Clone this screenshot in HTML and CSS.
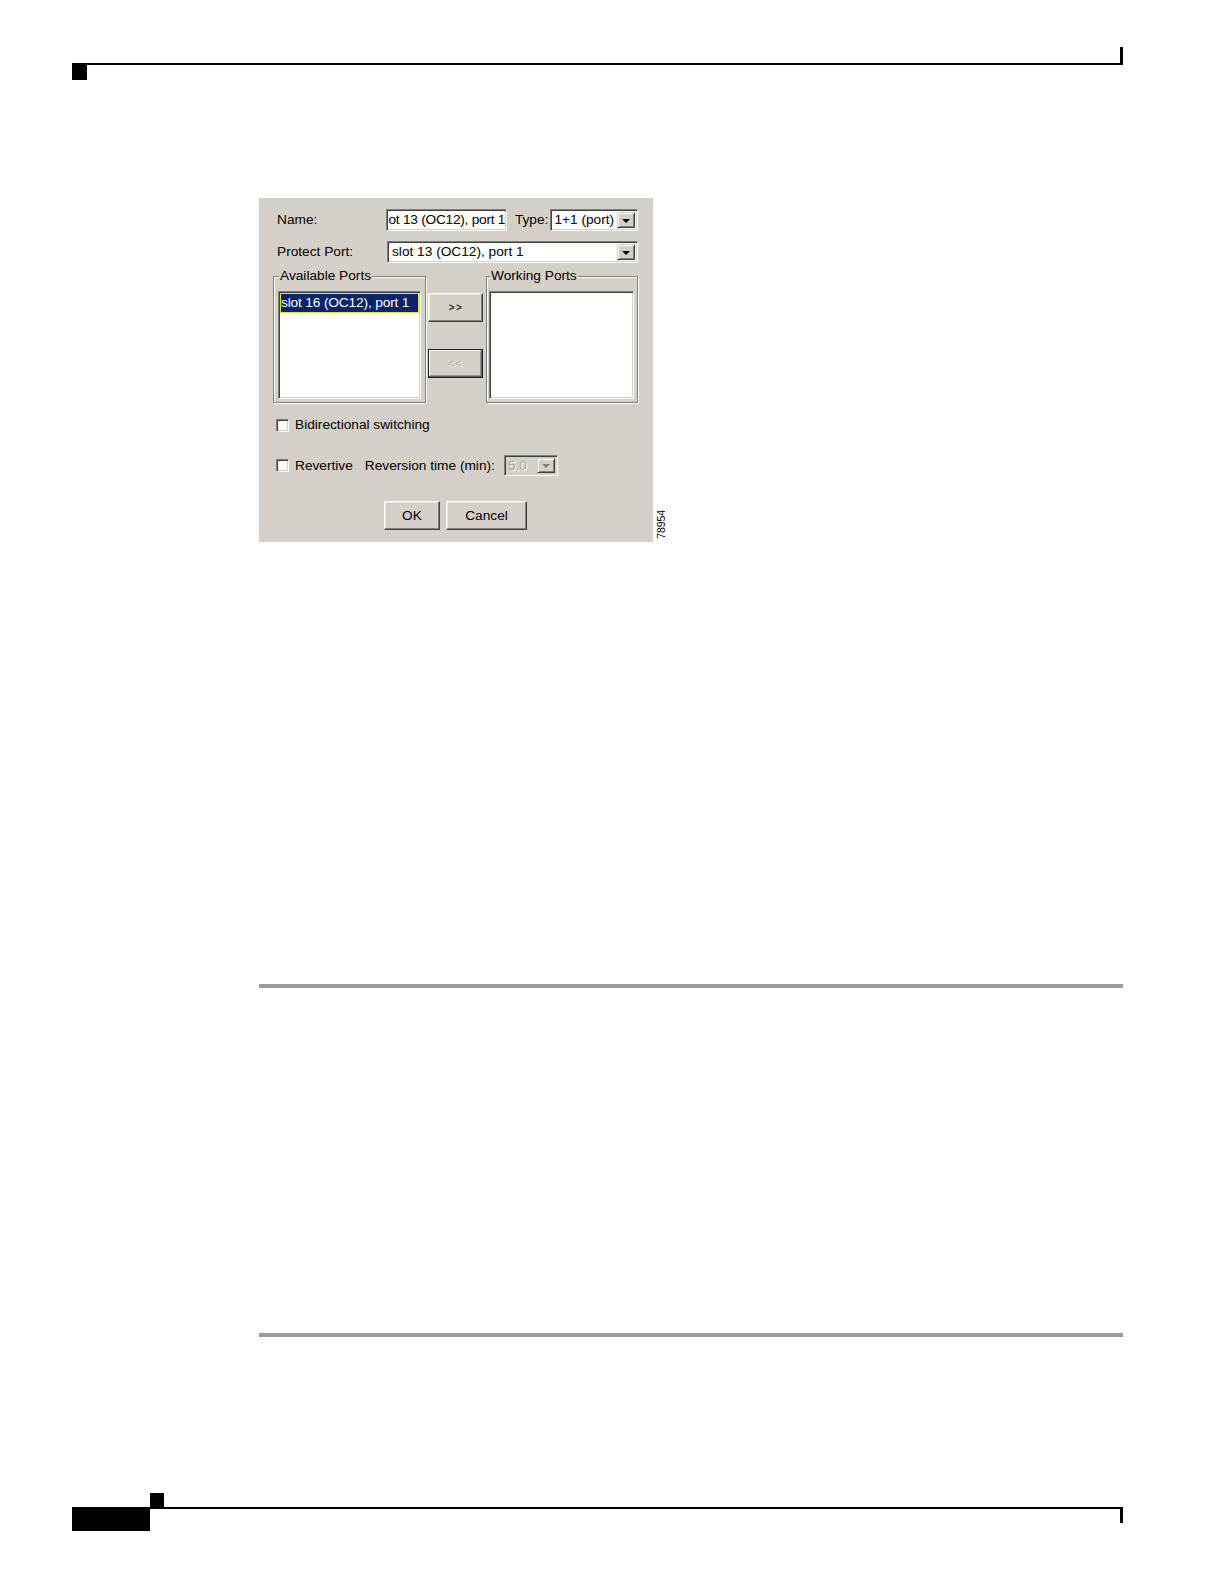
FILE: index.html
```html
<!DOCTYPE html>
<html>
<head>
<meta charset="utf-8">
<link rel="stylesheet" href="styles.css">
</head>
<body>
<div class="page">
  <div class="header"></div>
  <div class="header-mark"></div>

  <div class="figure">
    <div class="dialog">
      <div class="row row-name">
        <span class="label label-col">Name:</span>
        <div class="field field-name"><span class="field-text">ot 13 (OC12), port 1</span></div>
        <span class="label label-type">Type:</span>
        <div class="combo combo-type">
          <span class="combo-text">1+1 (port)</span>
          <span class="drop"><span class="arrow"></span></span>
        </div>
      </div>
      <div class="row row-protect">
        <span class="label label-col">Protect Port:</span>
        <div class="combo combo-protect">
          <span class="combo-text">slot 13 (OC12), port 1</span>
          <span class="drop"><span class="arrow"></span></span>
        </div>
      </div>
      <div class="groups">
        <div class="group">
          <span class="group-title">Available Ports</span>
          <div class="list">
            <div class="item selected">slot 16 (OC12), port 1</div>
          </div>
        </div>
        <div class="move-buttons">
          <div class="btn btn-move">&gt;&gt;</div>
          <div class="btn btn-move btn-disabled">&lt;&lt;</div>
        </div>
        <div class="group group-working">
          <span class="group-title">Working Ports</span>
          <div class="list"></div>
        </div>
      </div>
      <div class="row row-check1">
        <span class="checkbox"></span>
        <span class="label">Bidirectional switching</span>
      </div>
      <div class="row row-check2">
        <span class="checkbox"></span>
        <span class="label label-revertive">Revertive</span>
        <span class="label">Reversion time (min):</span>
        <div class="combo combo-time">
          <span class="combo-text">5.0</span>
          <span class="drop"><span class="arrow"></span></span>
        </div>
      </div>
      <div class="row row-buttons">
        <div class="btn btn-ok">OK</div>
        <div class="btn btn-cancel">Cancel</div>
      </div>
    </div>
    <div class="fig-id">78954</div>
  </div>

  <div class="rule rule-1"></div>
  <div class="rule rule-2"></div>

  <div class="footer-mark"></div>
  <div class="footer">
    <div class="footer-block"></div>
    <div class="footer-line"></div>
  </div>
</div>
</body>
</html>
```

FILE: styles.css
```css
html, body {
  margin: 0;
  padding: 0;
  background: #ffffff;
}

.page {
  width: 1222px;
  height: 1584px;
  overflow: hidden;
  font-family: "Liberation Sans", Arial, sans-serif;
  color: #000;
}

/* page header */
.header {
  margin: 47px 0 0 72px;
  width: 1051px;
  height: 18px;
  box-sizing: border-box;
  border-bottom: 2px solid #000;
  border-right: 3px solid #000;
}

.header-mark {
  margin-left: 72px;
  width: 15px;
  height: 15px;
  background: #000;
}

/* figure */
.figure {
  display: flex;
  align-items: flex-end;
  margin: 118px 0 0 259px;
}

.dialog {
  width: 394px;
  height: 344px;
  box-sizing: border-box;
  background: #d4d0c8;
  padding: 11px 15px 12px 14px;
  font-size: 13.7px;
  display: flex;
  flex-direction: column;
}

.fig-id {
  writing-mode: vertical-rl;
  transform: rotate(180deg);
  font-size: 10.5px;
  line-height: 8px;
  margin: 0 0 3px 4px;
  letter-spacing: -0.1px;
}

.row {
  display: flex;
  align-items: center;
}

.label {
  white-space: nowrap;
  line-height: 16px;
}

.label-col {
  width: 110px;
  margin-left: 4px;
}

.row-name {
  height: 22px;
}

.row-protect {
  height: 22px;
  margin-top: 10px;
}

/* sunken field */
.field, .combo, .list, .checkbox {
  box-sizing: border-box;
  background: #fff;
  border: 1px solid;
  border-color: #808080 #ffffff #ffffff #808080;
  box-shadow: inset 1px 1px 0 #404040, inset -1px -1px 0 #d4d0c8;
}

.field-name {
  width: 121px;
  height: 22px;
  display: flex;
  align-items: center;
  padding-left: 1px;
  overflow: hidden;
}

.field-text {
  white-space: nowrap;
  line-height: 16px;
  letter-spacing: -0.25px;
}

.label-type {
  margin-left: 8px;
  margin-right: 2px;
}

.combo {
  height: 22px;
  display: flex;
  align-items: center;
  padding: 2px;
}

.combo-text {
  flex: 1;
  white-space: nowrap;
  overflow: hidden;
  padding-left: 1px;
  line-height: 16px;
}

.combo-type {
  width: 88px;
}

.combo-protect {
  width: 251px;
}

.combo-protect .combo-text {
  padding-left: 2px;
}

.drop {
  width: 18px;
  height: 100%;
  box-sizing: border-box;
  background: #d4d0c8;
  border: 1px solid;
  border-color: #d4d0c8 #404040 #404040 #d4d0c8;
  box-shadow: inset 1px 1px 0 #ffffff, inset -1px -1px 0 #808080;
  display: flex;
  align-items: center;
  justify-content: center;
  flex: none;
}

.arrow {
  width: 0;
  height: 0;
  border-left: 4px solid transparent;
  border-right: 4px solid transparent;
  border-top: 4px solid #000;
  margin-top: 1px;
}

/* groups */
.groups {
  display: flex;
  margin-top: 5px;
  height: 135px;
  align-items: flex-start;
}

.group {
  margin-top: 8px;
  width: 153px;
  height: 127px;
  box-sizing: border-box;
  border: 1px solid #808080;
  box-shadow: inset 1px 1px 0 #ffffff, 1px 1px 0 #ffffff;
  padding: 0 4px 3px 4px;
}

.group-title {
  display: block;
  width: max-content;
  margin: -9px 0 0 1px;
  padding: 0 1px;
  background: #d4d0c8;
  line-height: 16px;
  height: 16px;
}

.list {
  margin-top: 7px;
  width: 143px;
  height: 108px;
  padding: 1px;
}

.group-working {
  width: 152px;
  padding-left: 2px;
}

.group-working .list {
  width: 145px;
}

.item {
  height: 20px;
  box-sizing: border-box;
  line-height: 18px;
  padding-left: 0;
  white-space: nowrap;
  overflow: hidden;
  letter-spacing: -0.15px;
}

.item.selected {
  background: #0a246a;
  color: #fff;
  border: 1px solid #e6e62a;
}

.move-buttons {
  display: flex;
  flex-direction: column;
  margin: 25px 3px 0 2px;
  gap: 27px;
}

/* raised buttons */
.btn {
  box-sizing: border-box;
  background: #d4d0c8;
  border: 1px solid;
  border-color: #ffffff #404040 #404040 #ffffff;
  box-shadow: inset -1px -1px 0 #808080, inset 1px 1px 0 #e8e6e0;
  display: flex;
  align-items: center;
  justify-content: center;
  white-space: nowrap;
}

.btn-move {
  width: 55px;
  height: 29px;
  font-size: 10px;
  letter-spacing: 1.5px;
  padding-left: 1px;
  font-weight: bold;
  color: #333;
}

.btn-disabled {
  border-color: #202020;
  box-shadow: inset -1px -1px 0 #606060, inset 1px 1px 0 #ffffff, inset -2px -2px 0 #909090;
  color: #aaa69e;
  font-weight: normal;
  text-shadow: 1px 1px 0 #fff;
}

/* checkbox rows */
.checkbox {
  width: 13px;
  height: 13px;
  margin: 0 6px 0 3px;
  flex: none;
}

.row-check1 {
  margin-top: 14px;
  height: 16px;
}

.row-check2 {
  margin-top: 22px;
  height: 21px;
}

.label-revertive {
  margin-right: 12px;
}

.combo-time {
  width: 54px;
  height: 21px;
  margin-left: 9px;
  background: #d4d0c8;
}

.combo-time .combo-text {
  color: #a8a49c;
  text-shadow: 1px 1px 0 #fff;
}

.combo-time .arrow {
  border-top-color: #808080;
}

.row-buttons {
  margin-top: 25px;
  padding-left: 111px;
  gap: 6px;
}

.btn-ok {
  width: 56px;
  height: 29px;
}

.btn-cancel {
  width: 81px;
  height: 29px;
}

/* rules */
.rule {
  margin-left: 259px;
  width: 864px;
  height: 4px;
  background: #9b9b9b;
}

.rule-1 {
  margin-top: 442px;
}

.rule-2 {
  margin-top: 345px;
}

/* footer */
.footer-mark {
  margin: 156px 0 0 150px;
  width: 14px;
  height: 14px;
  background: #000;
}

.footer {
  display: flex;
  margin-left: 72px;
  width: 1051px;
}

.footer-block {
  width: 78px;
  height: 24px;
  background: #000;
}

.footer-line {
  flex: 1;
  height: 16px;
  box-sizing: border-box;
  border-top: 2px solid #000;
  border-right: 3px solid #000;
}
```
